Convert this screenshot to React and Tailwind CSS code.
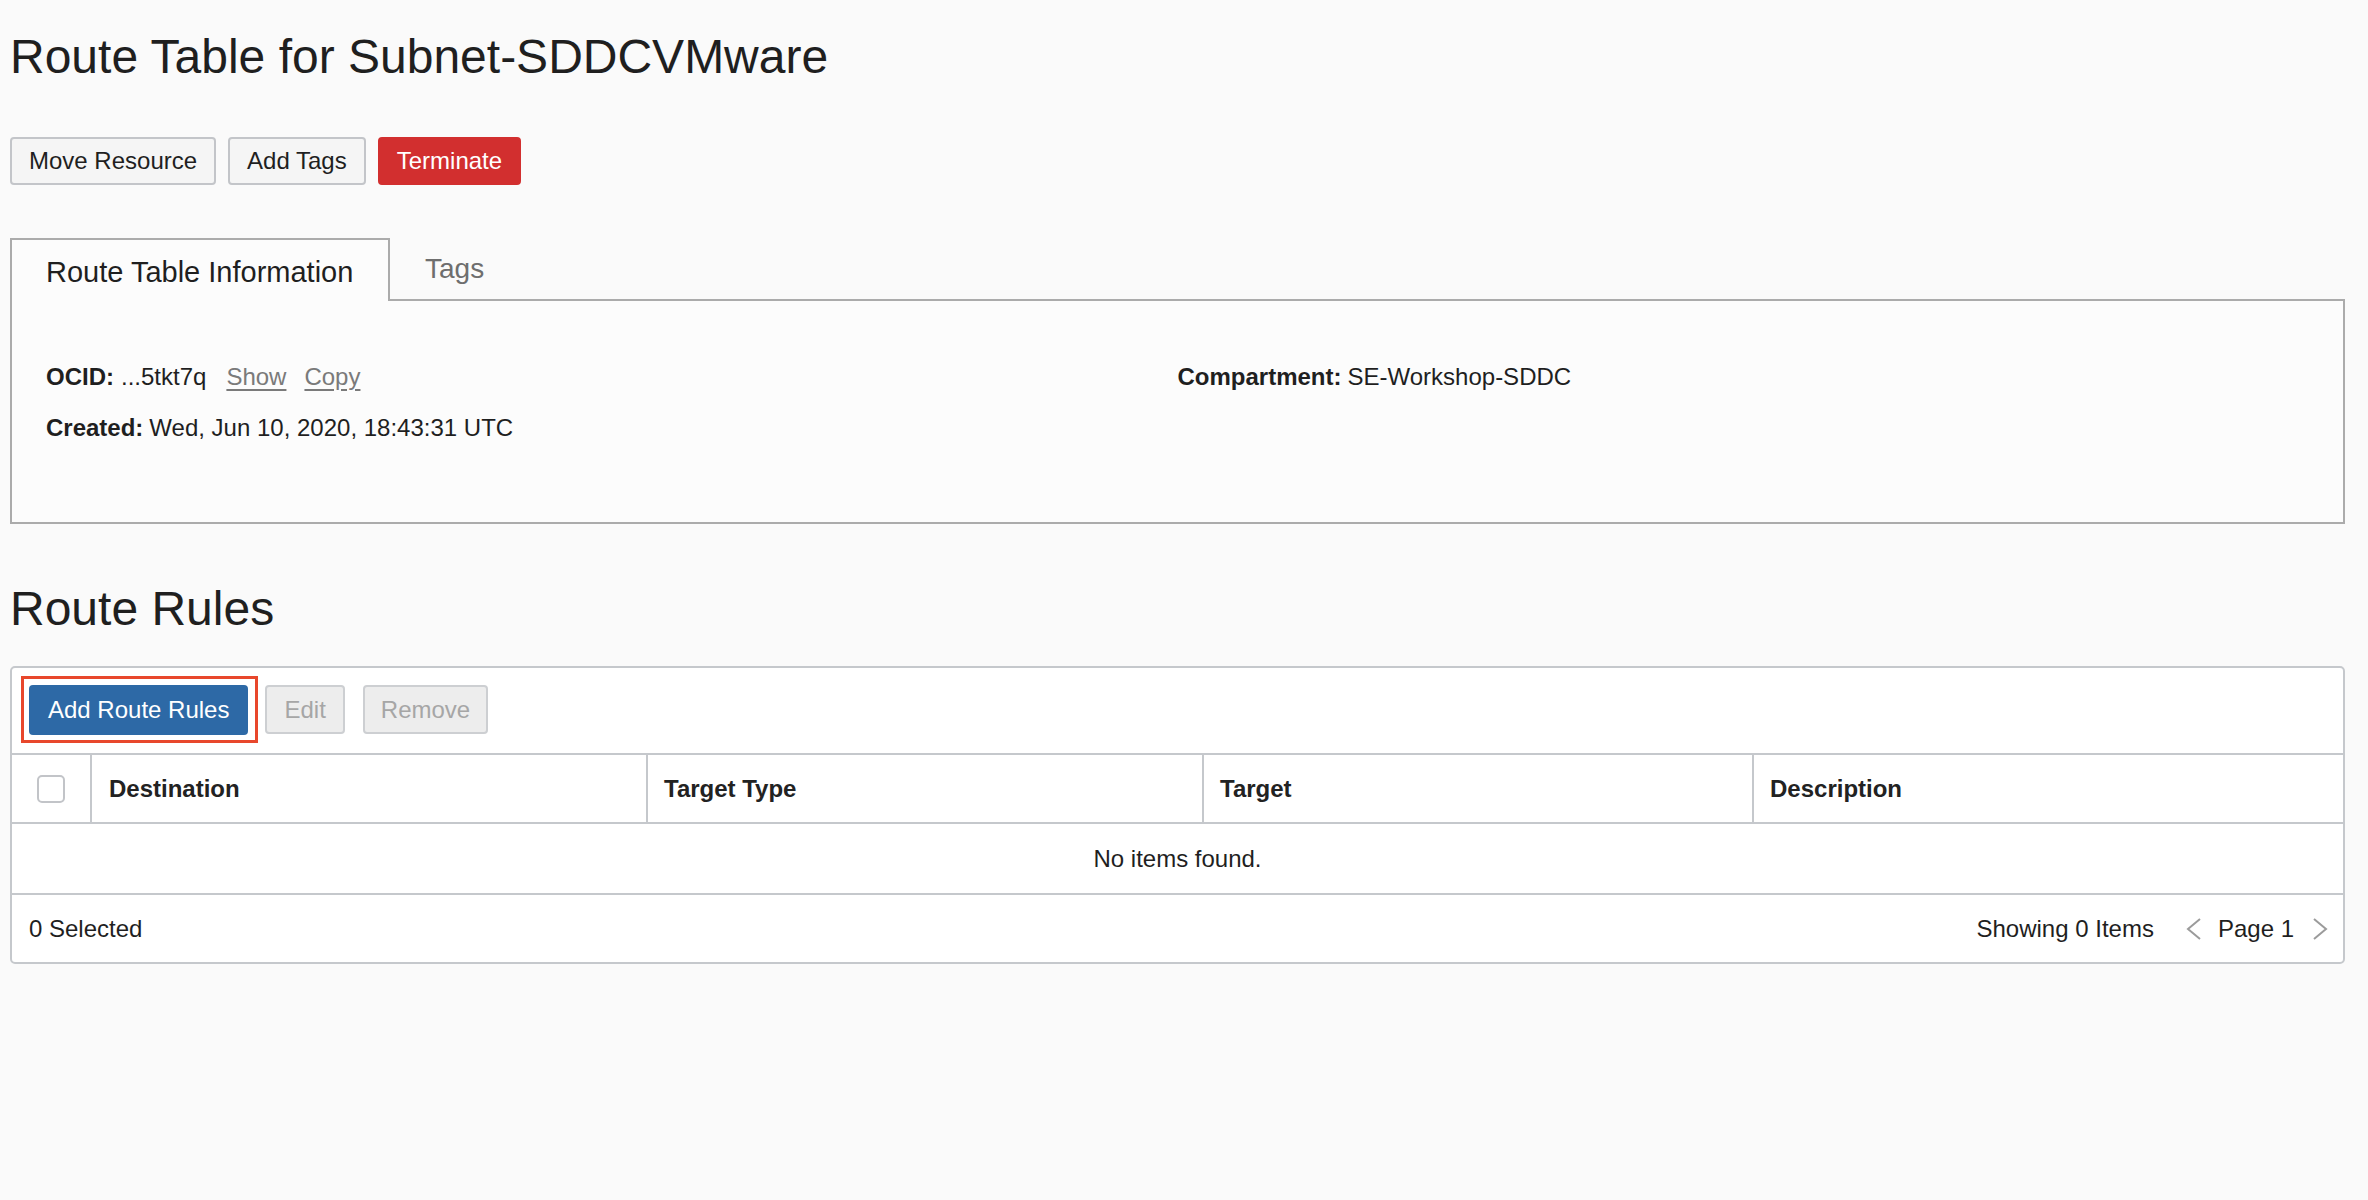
import React from "react";

function Btn({ children, className = "" }) {
  return (
    <button
      className={
        "h-[48px] px-[17px] rounded-[4px] border-2 text-[24px] leading-none flex items-center " +
        className
      }
    >
      {children}
    </button>
  );
}

function Chevron({ dir }) {
  return (
    <svg width="16" height="22" viewBox="0 0 16 22" fill="none">
      {dir === "left" ? (
        <polyline points="14,1 2,11 14,21" stroke="#9b9b9b" strokeWidth="2" />
      ) : (
        <polyline points="2,1 14,11 2,21" stroke="#9b9b9b" strokeWidth="2" />
      )}
    </svg>
  );
}

export default function App() {
  return (
    <div className="min-h-screen w-full bg-[#fafafa] text-[#1f1f1f] pl-[10px] pr-[23px] font-['Liberation_Sans',Arial,Helvetica,sans-serif]">
      <h1 className="pt-[29px] text-[48px] leading-[55px] font-normal">
        Route Table for Subnet-SDDCVMware
      </h1>

      <div className="mt-[53px] flex gap-[12px]">
        <Btn className="bg-[#f5f5f5] border-[#c3c5c9] text-[#1f1f1f]">Move Resource</Btn>
        <Btn className="bg-[#f5f5f5] border-[#c3c5c9] text-[#1f1f1f]">Add Tags</Btn>
        <Btn className="bg-[#d22f2f] border-[#d22f2f] text-white">Terminate</Btn>
      </div>

      {/* Tabs */}
      <div className="mt-[53px] flex h-[63px]">
        <div className="w-[380px] border-2 border-b-0 border-[#ababab] bg-[#fcfcfc] pl-[34px] pt-[3px] flex items-center text-[29px] leading-[29px] text-[#1f1f1f]">
          Route Table Information
        </div>
        <div className="flex-1 border-b-2 border-[#ababab] pl-[35px] pt-[1px] flex items-center text-[28px] leading-[28px] text-[#6e6e6e]">
          Tags
        </div>
      </div>
      <div className="border-2 border-t-0 border-[#ababab] bg-[#fcfcfc] pl-[34px] pr-[34px] pt-[59px] pb-[77px] grid grid-cols-2 text-[24px] leading-[34px]">
        <div className="flex flex-col gap-[17px]">
          <div className="flex items-baseline">
            <span className="font-bold">OCID:</span>
            <span className="ml-[7px]">...5tkt7q</span>
            <span className="ml-[20px] underline text-[#7a7a7a] underline-offset-[4px]">Show</span>
            <span className="ml-[18px] underline text-[#7a7a7a] underline-offset-[4px]">Copy</span>
          </div>
          <div className="flex items-baseline">
            <span className="font-bold">Created:</span>
            <span className="ml-[6px]">Wed, Jun 10, 2020, 18:43:31 UTC</span>
          </div>
        </div>
        <div className="flex items-baseline">
          <span className="font-bold">Compartment:</span>
          <span className="ml-[6px]">SE-Workshop-SDDC</span>
        </div>
      </div>

      <h2 className="mt-[57px] text-[48px] leading-[55px] font-normal">Route Rules</h2>

      {/* Table */}
      <div className="mt-[30px] border-2 border-[#c5c8cc] rounded-[5px] bg-white">
        <div className="flex items-center pl-[9px] pt-[8px] pb-[10px]">
          <div className="border-[3px] border-[#e8472c] pl-[5px] pr-[7px] pt-[6px] pb-[5px]">
            <button className="h-[50px] px-[19px] rounded-[4px] bg-[#2d69a6] text-white text-[24px] leading-none">
              Add Route Rules
            </button>
          </div>
          <button className="ml-[7px] h-[49px] px-[17px] rounded-[4px] border-2 border-[#cdcfd2] bg-[#ededed] text-[#a6a6a6] text-[24px] leading-none">
            Edit
          </button>
          <button className="ml-[18px] h-[49px] px-[16px] rounded-[4px] border-2 border-[#cdcfd2] bg-[#ededed] text-[#a6a6a6] text-[24px] leading-none">
            Remove
          </button>
        </div>

        <div className="grid grid-cols-[78px_556px_556px_550px_1fr] border-t-2 border-b-2 border-[#c5c8cc] h-[71px] text-[24px] font-bold text-[#222]">
          <div className="flex items-center justify-center">
            <div className="w-[28px] h-[28px] border-2 border-[#c2c4c8] rounded-[5px] bg-white"></div>
          </div>
          <div className="border-l-2 border-[#c5c8cc] pl-[17px] flex items-center">Destination</div>
          <div className="border-l-2 border-[#c5c8cc] pl-[16px] flex items-center">Target Type</div>
          <div className="border-l-2 border-[#c5c8cc] pl-[16px] flex items-center">Target</div>
          <div className="border-l-2 border-[#c5c8cc] pl-[16px] flex items-center">Description</div>
        </div>

        <div className="h-[71px] border-b-2 border-[#c5c8cc] flex items-center justify-center text-[24px] text-[#1f1f1f]">
          No items found.
        </div>

        <div className="h-[67px] flex items-center pl-[17px] pr-[15px] text-[24px] text-[#1f1f1f]">
          <span>0 Selected</span>
          <span className="ml-auto">Showing 0 Items</span>
          <span className="ml-[32px] flex items-center">
            <Chevron dir="left" />
          </span>
          <span className="ml-[16px]">Page 1</span>
          <span className="ml-[18px] flex items-center">
            <Chevron dir="right" />
          </span>
        </div>
      </div>
    </div>
  );
}
